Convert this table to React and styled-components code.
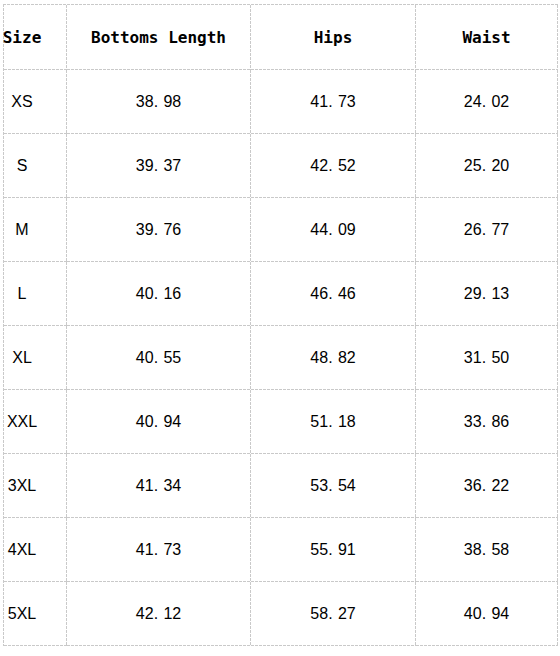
import React from "react";
import styled, { createGlobalStyle } from "styled-components";

const Global = createGlobalStyle`
  html, body { margin: 0; padding: 0; background: #fff; }
  body { font-family: "Liberation Sans", Arial, sans-serif; color: #000; }
`;

const Page = styled.div`
  padding: 4px 0 0 3px;
`;

const line = "#c9c9c9";

const Table = styled.div`
  display: grid;
  grid-template-columns: 63px 184px 165px 142px;
  width: max-content;
  padding: 1px 0 0 1px;
  background:
    repeating-linear-gradient(to right, ${line} 0 3px, transparent 3px 4px) top left / 100% 1px no-repeat,
    repeating-linear-gradient(to bottom, ${line} 0 3px, transparent 3px 4px) top left / 1px 100% no-repeat;
`;

const Cell = styled.div`
  box-sizing: border-box;
  height: ${(p) => (p.$head ? 65 : 64)}px;
  padding: 0 ${(p) => (p.$first ? 27 : 1)}px 1px 0;
  background:
    repeating-linear-gradient(to right, ${line} 0 3px, transparent 3px 4px) bottom left / 100% 1px no-repeat,
    repeating-linear-gradient(to bottom, ${line} 0 3px, transparent 3px 4px) top right / 1px 100% no-repeat;
  display: flex;
  align-items: center;
  justify-content: center;
  white-space: nowrap;
  font-size: 16px;
  font-family: ${(p) =>
    p.$head
      ? `"DejaVu Sans Mono", "Liberation Mono", monospace`
      : `"Liberation Sans", Arial, sans-serif`};
  font-weight: ${(p) => (p.$head ? 700 : 400)};
`;

const Value = styled.span`
  display: inline-flex;
  align-items: baseline;
`;

const Dot = styled.span`
  margin-right: 5.3px;
`;

const Num = ({ v }) => {
  const [a, b] = v.split(".");
  return (
    <Value>
      {a}
      <Dot>.</Dot>
      {b}
    </Value>
  );
};

const headers = ["Size", "Bottoms Length", "Hips", "Waist"];
const rows = [
  ["XS", "38.98", "41.73", "24.02"],
  ["S", "39.37", "42.52", "25.20"],
  ["M", "39.76", "44.09", "26.77"],
  ["L", "40.16", "46.46", "29.13"],
  ["XL", "40.55", "48.82", "31.50"],
  ["XXL", "40.94", "51.18", "33.86"],
  ["3XL", "41.34", "53.54", "36.22"],
  ["4XL", "41.73", "55.91", "38.58"],
  ["5XL", "42.12", "58.27", "40.94"],
];

export default function App() {
  return (
    <>
      <Global />
      <Page>
        <Table>
          {headers.map((h, i) => (
            <Cell key={h} $head $first={i === 0}>
              {h}
            </Cell>
          ))}
          {rows.map((r) =>
            r.map((c, i) => (
              <Cell key={r[0] + i} $first={i === 0}>
                {i === 0 ? c : <Num v={c} />}
              </Cell>
            ))
          )}
        </Table>
      </Page>
    </>
  );
}
